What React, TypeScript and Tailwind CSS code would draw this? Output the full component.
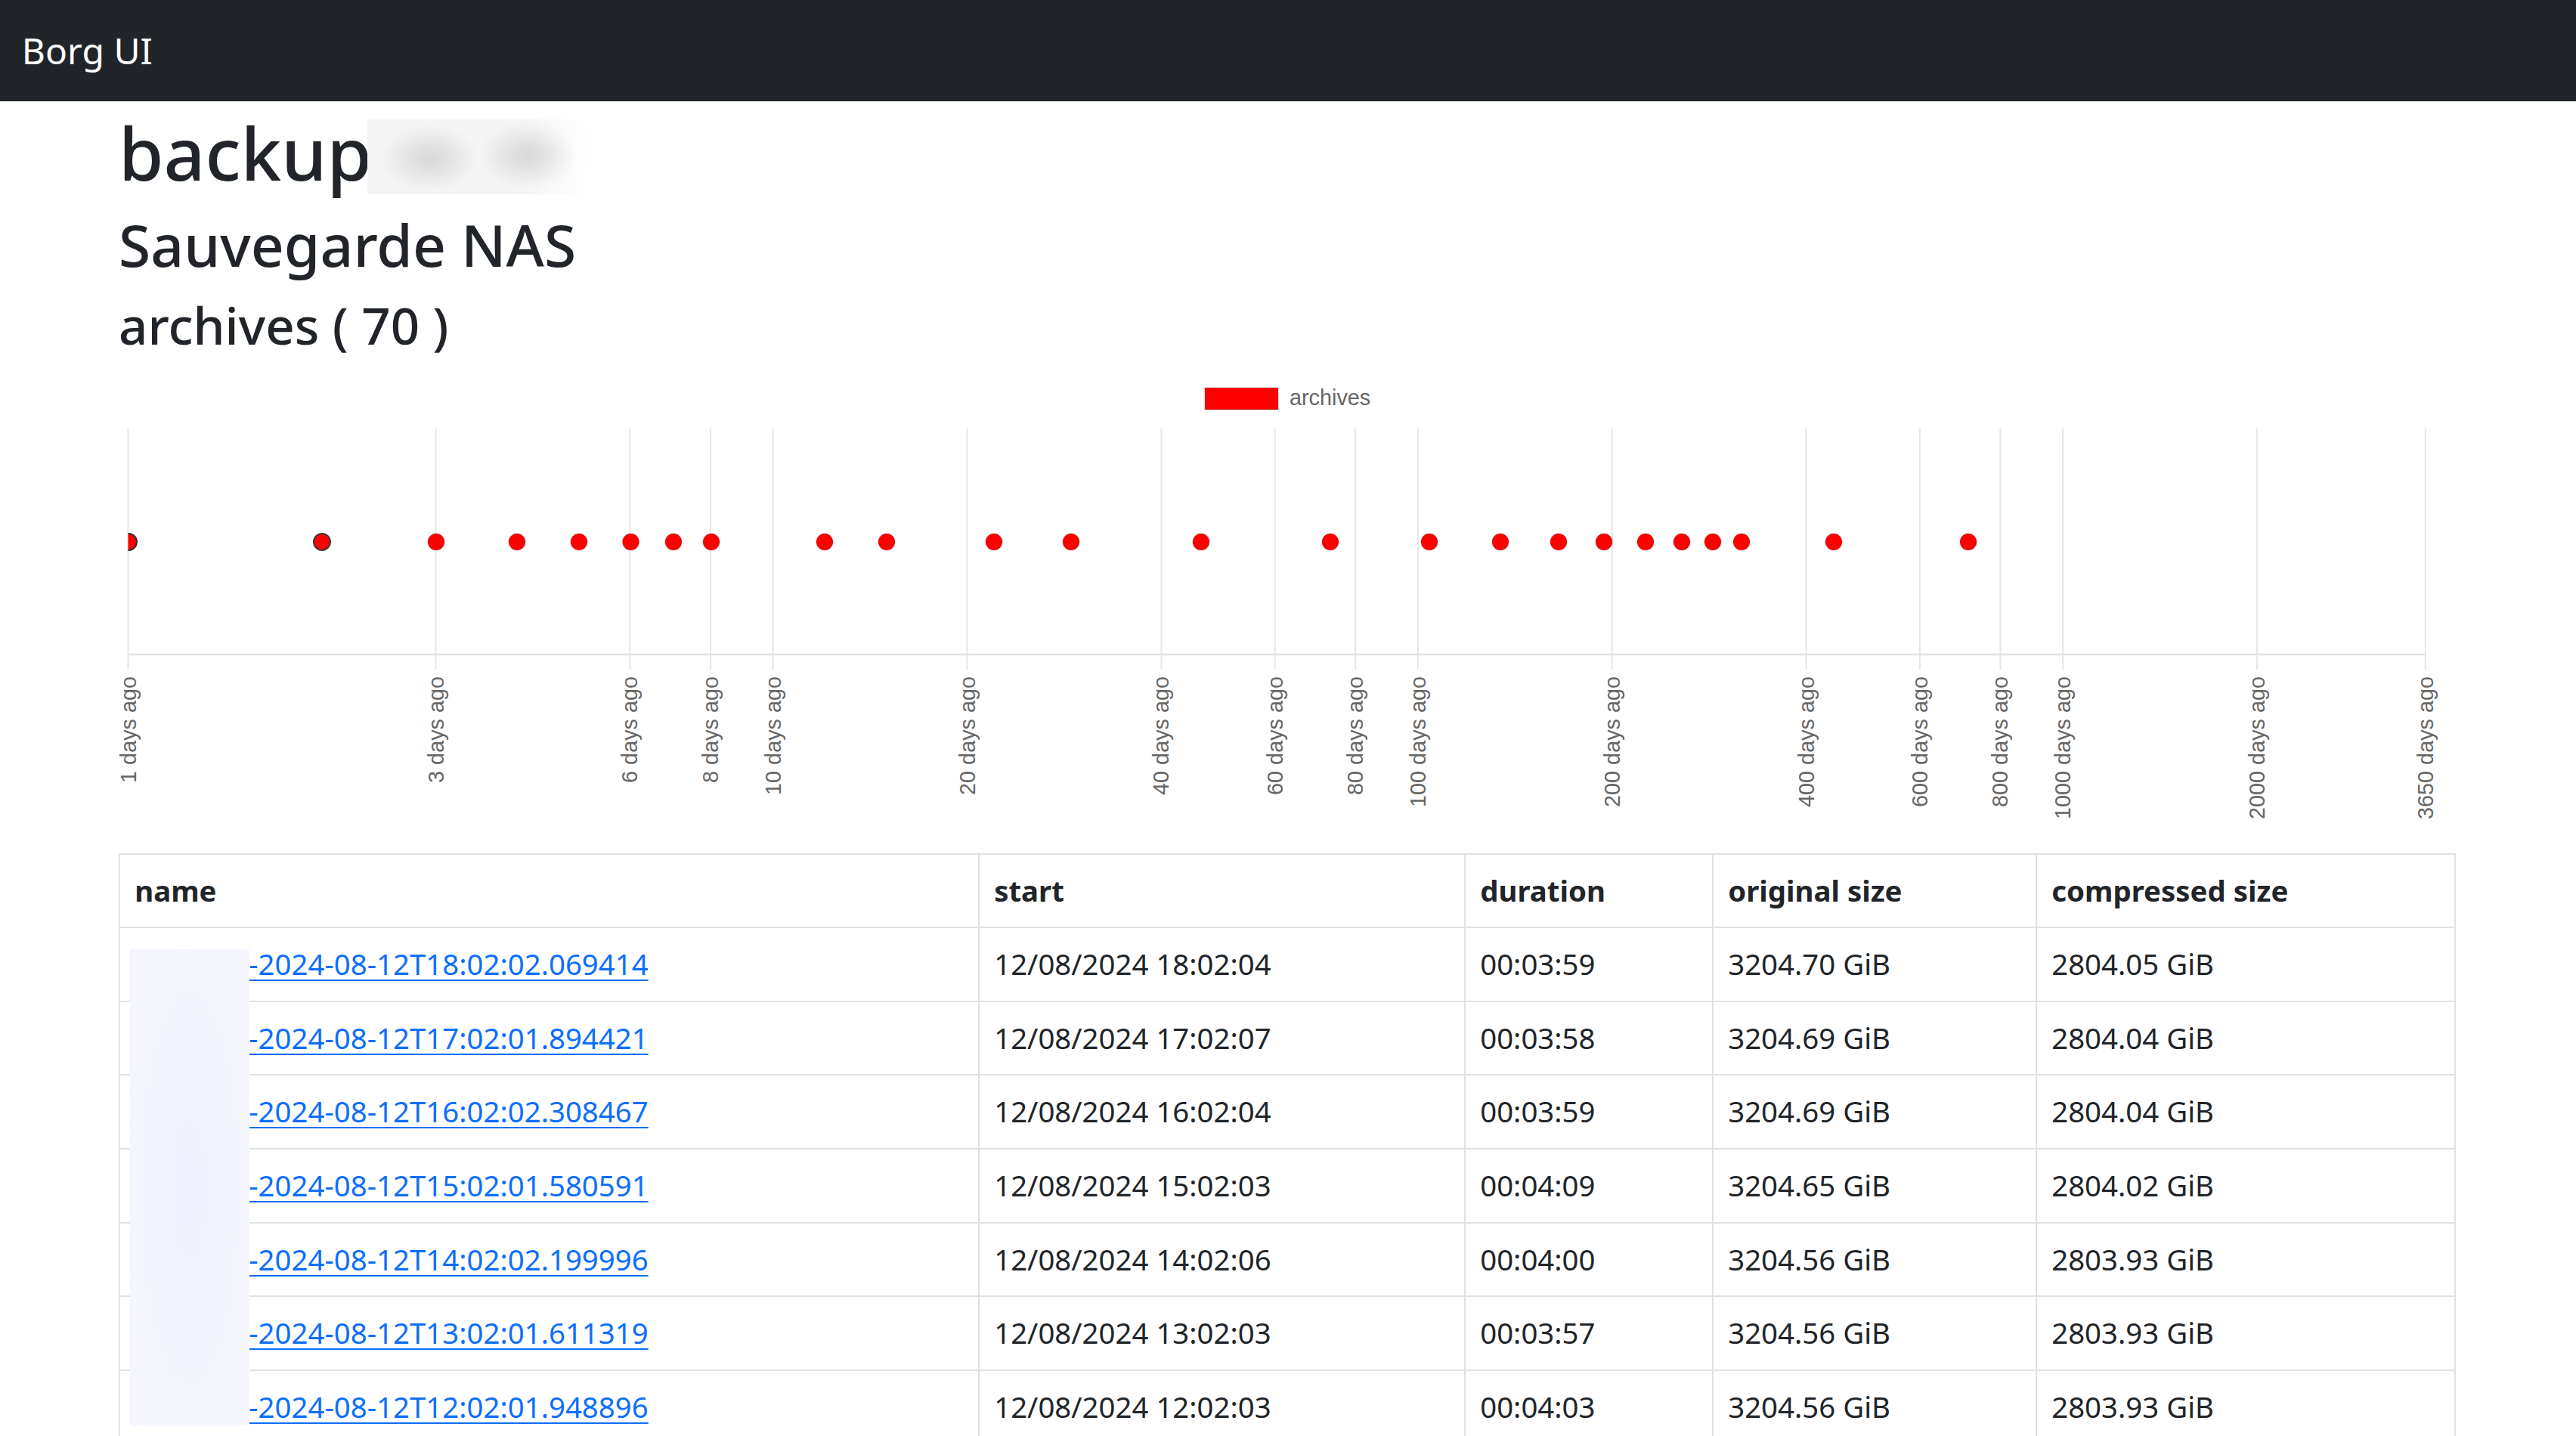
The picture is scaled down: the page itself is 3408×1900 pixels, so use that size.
import React from "react"

// Archive rows shown in the table
const archives = [
  { name: "-2024-08-12T18:02:02.069414", start: "12/08/2024 18:02:04", duration: "00:03:59", original: "3204.70 GiB", compressed: "2804.05 GiB" },
  { name: "-2024-08-12T17:02:01.894421", start: "12/08/2024 17:02:07", duration: "00:03:58", original: "3204.69 GiB", compressed: "2804.04 GiB" },
  { name: "-2024-08-12T16:02:02.308467", start: "12/08/2024 16:02:04", duration: "00:03:59", original: "3204.69 GiB", compressed: "2804.04 GiB" },
  { name: "-2024-08-12T15:02:01.580591", start: "12/08/2024 15:02:03", duration: "00:04:09", original: "3204.65 GiB", compressed: "2804.02 GiB" },
  { name: "-2024-08-12T14:02:02.199996", start: "12/08/2024 14:02:06", duration: "00:04:00", original: "3204.56 GiB", compressed: "2803.93 GiB" },
  { name: "-2024-08-12T13:02:01.611319", start: "12/08/2024 13:02:03", duration: "00:03:57", original: "3204.56 GiB", compressed: "2803.93 GiB" },
  { name: "-2024-08-12T12:02:01.948896", start: "12/08/2024 12:02:03", duration: "00:04:03", original: "3204.56 GiB", compressed: "2803.93 GiB" },
]

const ticks = [1, 3, 6, 8, 10, 20, 40, 60, 80, 100, 200, 400, 600, 800, 1000, 2000, 3650]
const dots = [269, 420, 527, 609, 677.5, 734, 784, 934, 1016, 1158, 1260, 1432, 1603, 1734, 1828, 1905, 1965, 2020, 2068, 2109, 2147, 2269, 2447]

const tickX = (days: number) => 12.5 + 853.2 * Math.log10(days)

function ArchiveChart() {
  const top = 77
  const axis = 376
  const left = tickX(1)
  const right = tickX(3650)
  const dotY = 227

  return (
    <svg width={3092} height={639} className="block overflow-visible" fontFamily="'Liberation Sans', Arial, sans-serif">
      <defs>
        <clipPath id="plot">
          <rect x={left} y={top} width={right - left} height={axis - top} />
        </clipPath>
      </defs>

      {/* legend */}
      <rect x={1437} y={23} width={97} height={29} fill="#ff0000" stroke="rgba(0,0,0,0.1)" strokeWidth={2} />
      <text x={1549} y={46} fontSize={28.8} fill="#666">archives</text>

      {/* grid */}
      {ticks.map((d) => (
        <line key={d} x1={tickX(d)} x2={tickX(d)} y1={top} y2={axis + 20} stroke="#e6e6e6" strokeWidth={2} />
      ))}
      <line x1={left} x2={right} y1={axis} y2={axis} stroke="#e3e3e3" strokeWidth={2.4} />

      {/* points */}
      <g clipPath="url(#plot)">
        <circle cx={13} cy={dotY} r={11} fill="#ff0000" stroke="#2f2f2f" strokeWidth={2} />
        {dots.map((x, i) => (
          <circle key={x} cx={x} cy={dotY} r={11} fill="#ff0000" stroke={i === 0 ? "#3a3a3a" : "rgba(0,0,0,0.1)"} strokeWidth={2} />
        ))}
      </g>

      {/* tick labels */}
      {ticks.map((d) => (
        <text
          key={d}
          transform={`translate(${tickX(d)}, 405) rotate(-90)`}
          textAnchor="end"
          dominantBaseline="central"
          fontSize={28.8}
          fill="#666"
        >
          {d} days ago
        </text>
      ))}
    </svg>
  )
}

function ArchiveTable() {
  const cell = "border-2 border-[#dee2e6] px-[19.2px] py-[19px] text-left align-top"

  return (
    <div className="relative">
      <table className="w-full table-fixed border-collapse text-[38.4px] leading-[57.6px] text-[#212529]">
        <colgroup>
          <col className="w-[1137px]" />
          <col className="w-[643px]" />
          <col className="w-[328px]" />
          <col className="w-[428px]" />
          <col />
        </colgroup>
        <thead>
          <tr>
            <th className={`${cell} font-bold`}>name</th>
            <th className={`${cell} font-bold`}>start</th>
            <th className={`${cell} font-bold`}>duration</th>
            <th className={`${cell} font-bold`}>original size</th>
            <th className={`${cell} font-bold`}>compressed size</th>
          </tr>
        </thead>
        <tbody>
          {archives.map((a) => (
            <tr key={a.name}>
              <td className={cell}>
                <span className="inline-block w-[151px]" />
                <a href="#" className="text-[#0d6efd] underline decoration-[2.4px] underline-offset-[6px]">{a.name}</a>
              </td>
              <td className={cell}>{a.start}</td>
              <td className={cell}>{a.duration}</td>
              <td className={cell}>{a.original}</td>
              <td className={cell}>{a.compressed}</td>
            </tr>
          ))}
        </tbody>
      </table>

      {/* blurred repository prefix */}
      <div className="absolute left-[15px] top-[127px] h-[631px] w-[158px] bg-[#f5f7fe] bg-[image:radial-gradient(ellipse_at_50%_50%,#edf0fd_0%,#f6f7fe_75%)]" />
    </div>
  )
}

export default function App() {
  return (
    <div className="min-h-screen bg-white font-['Noto_Sans',sans-serif] text-[#212529]">
      <nav className="flex h-[134px] items-center bg-[#212529] px-[28.8px]">
        <span className="text-[48px] leading-[72px] text-white">Borg UI</span>
      </nav>

      <main className="ml-[157px] w-[3092px] pt-[10px]">
        <h1 className="mb-[19.2px] flex items-start text-[96px] leading-[1.2] font-medium">
          <span>backup</span>
          <span className="relative -ml-[6px] mt-[14px] inline-block h-[99px] w-[294px] bg-[#f6f6f6] bg-[image:radial-gradient(ellipse_22%_45%_at_28%_52%,#d8d8d8_0%,transparent_100%),radial-gradient(ellipse_22%_45%_at_72%_48%,#d8d8d8_0%,transparent_100%),linear-gradient(to_right,#f4f4f4_70%,#ffffff_100%)]" />
        </h1>
        <h2 className="mb-[19.2px] text-[76.8px] leading-[1.2] font-medium">Sauvegarde NAS</h2>
        <h3 className="mb-[19.2px] text-[67.2px] leading-[1.2] font-medium">archives ( 70 )</h3>

        <ArchiveChart />
        <ArchiveTable />
      </main>
    </div>
  )
}
